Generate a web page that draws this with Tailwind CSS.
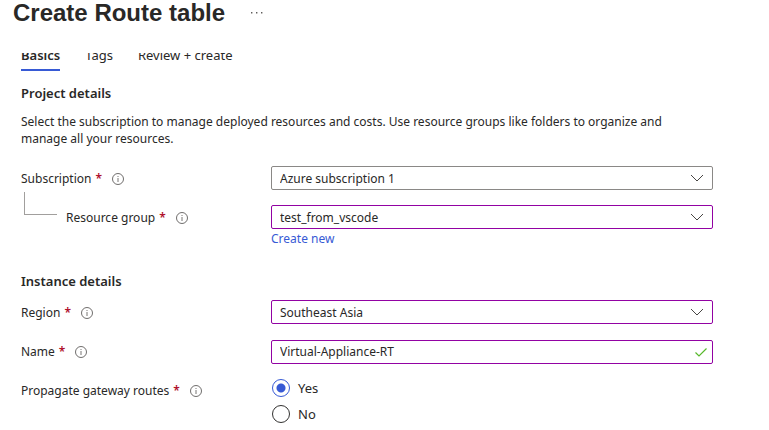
<!DOCTYPE html>
<html lang="en">
<head>
<meta charset="utf-8">
<meta name="viewport" content="width=device-width, initial-scale=1">
<title>Create Route table</title>
<script src="https://cdn.jsdelivr.net/npm/@tailwindcss/browser@4"></script>
</head>
<body class="bg-white font-['Noto_Sans','Open_Sans',sans-serif] text-[12px] leading-4 text-[#292827]">
<svg class="hidden" aria-hidden="true">
  <symbol id="info" viewBox="0 0 12 12"><circle cx="6" cy="6" r="5.5" fill="none" stroke="#605e5c" stroke-width="0.9"/><path d="M6 5v4M6 3v1" stroke="#797775" stroke-width="1" fill="none"/></symbol>
  <symbol id="chevron" viewBox="0 0 14 8"><path d="M1 1l6 6 6-6" fill="none" stroke="#484644" stroke-width="1"/></symbol>
</svg>
<header class="flex h-[53px] items-start gap-[26px] pl-[13px]">
  <h1 class="font-['Liberation_Sans',Arial,sans-serif] text-[24px] leading-[26px] font-bold">Create Route table</h1>
  <button type="button" aria-label="More actions" class="flex h-[26px] items-center"><svg class="h-1 w-3" viewBox="0 0 12 4" fill="#605e5c"><path d="M0 1h1.4v1.4H0zM5 1h1.4v1.4H5zM10 1h1.4v1.4H10z"/></svg></button>
</header>
<main class="pr-14 pl-[21px]">
  <nav class="flex h-[18px] items-end gap-[25px] overflow-hidden text-[13px]" aria-label="Steps">
    <a href="#basics" aria-current="page" class="border-b-2 border-[#375ad5] pb-[6px] font-semibold">Basics</a>
    <a href="#tags" class="border-b-2 border-transparent pb-[6px]">Tags</a>
    <a href="#review" class="border-b-2 border-transparent pb-[6px]">Review + create</a>
  </nav>
  <section>
    <h2 class="mt-[14px] text-[13px] font-semibold">Project details</h2>
    <p class="mt-3 max-w-[680px] leading-[17px]">Select the subscription to manage deployed resources and costs. Use resource groups like folders to organize and manage all your resources.</p>
    <div class="mt-[19px] flex h-6 items-center">
      <div class="flex w-[250px] shrink-0 items-center gap-[10px] pt-[2px]"><label for="sub" class="flex gap-1">Subscription <span class="font-semibold text-[#b0102c]">*</span></label><button type="button" aria-label="About Subscription"><svg class="size-3"><use href="#info"/></svg></button></div>
      <div class="relative flex-1"><select id="sub" class="block h-6 w-full appearance-none rounded-xs border border-[#8a8886] bg-white px-2 pt-px"><option>Azure subscription 1</option></select><svg class="pointer-events-none absolute top-2 right-[9px] h-2 w-3.5"><use href="#chevron"/></svg></div>
    </div>
    <div class="mt-[15px] flex h-6 items-center">
      <div class="flex w-[250px] shrink-0 items-center gap-[10px] pt-[2px]"><span class="relative -mr-[10px] w-[45px] self-stretch"><span class="absolute bottom-[11px] left-[3px] h-[23px] w-[33px] border-b border-l border-[#a19f9d]"></span></span><label for="rg" class="flex gap-1">Resource group <span class="font-semibold text-[#b0102c]">*</span></label><button type="button" aria-label="About Resource group"><svg class="size-3"><use href="#info"/></svg></button></div>
      <div class="relative flex-1"><select id="rg" class="block h-6 w-full appearance-none rounded-xs border border-[#9202a3] bg-white px-2 pt-px"><option>test_from_vscode</option></select><svg class="pointer-events-none absolute top-2 right-[9px] h-2 w-3.5"><use href="#chevron"/></svg></div>
    </div>
    <div class="mt-[2px] pl-[250px]"><a href="#new" class="text-[#375ad5]">Create new</a></div>
  </section>
  <section>
    <h2 class="mt-[26px] text-[13px] font-semibold">Instance details</h2>
    <div class="mt-[11px] flex h-6 items-center">
      <div class="flex w-[250px] shrink-0 items-center gap-[10px] pt-[2px]"><label for="region" class="flex gap-1">Region <span class="font-semibold text-[#b0102c]">*</span></label><button type="button" aria-label="About Region"><svg class="size-3"><use href="#info"/></svg></button></div>
      <div class="relative flex-1"><select id="region" class="block h-6 w-full appearance-none rounded-xs border border-[#9202a3] bg-white px-2 pt-px"><option>Southeast Asia</option></select><svg class="pointer-events-none absolute top-2 right-[9px] h-2 w-3.5"><use href="#chevron"/></svg></div>
    </div>
    <div class="mt-4 flex h-6 items-center">
      <div class="flex w-[250px] shrink-0 items-center gap-[10px]"><label for="name" class="flex gap-1">Name <span class="font-semibold text-[#b0102c]">*</span></label><button type="button" aria-label="About Name"><svg class="size-3"><use href="#info"/></svg></button></div>
      <div class="relative flex-1"><input id="name" type="text" value="Virtual-Appliance-RT" class="block h-6 w-full rounded-xs border border-[#9202a3] bg-white px-2 pb-px"><svg class="pointer-events-none absolute top-2 right-[6px] h-[9px] w-3" viewBox="0 0 12 9"><path d="M.5 4.5l3.5 3.5L11.5.5" fill="none" stroke="#57b82b" stroke-width="1.2"/></svg></div>
    </div>
    <div class="mt-[15px] flex items-start" role="radiogroup" aria-labelledby="propagate">
      <div class="flex h-6 w-[250px] shrink-0 items-center gap-[10px]"><span id="propagate" class="flex gap-1">Propagate gateway routes <span class="font-semibold text-[#b0102c]">*</span></span><button type="button" aria-label="About Propagate gateway routes"><svg class="size-3"><use href="#info"/></svg></button></div>
      <div class="flex flex-col gap-2 pl-px">
        <label class="flex items-center gap-2 text-[13px] leading-[18px]"><input type="radio" name="p" checked class="size-[18px] appearance-none rounded-full border border-[#323130] checked:border-[#375ad5] checked:bg-[radial-gradient(circle,#375ad5_4px,transparent_5px)]">Yes</label>
        <label class="flex items-center gap-2 text-[13px] leading-[18px]"><input type="radio" name="p" class="size-[18px] appearance-none rounded-full border border-[#323130] checked:border-[#375ad5] checked:bg-[radial-gradient(circle,#375ad5_4px,transparent_5px)]">No</label>
      </div>
    </div>
  </section>
</main>
</body>
</html>
